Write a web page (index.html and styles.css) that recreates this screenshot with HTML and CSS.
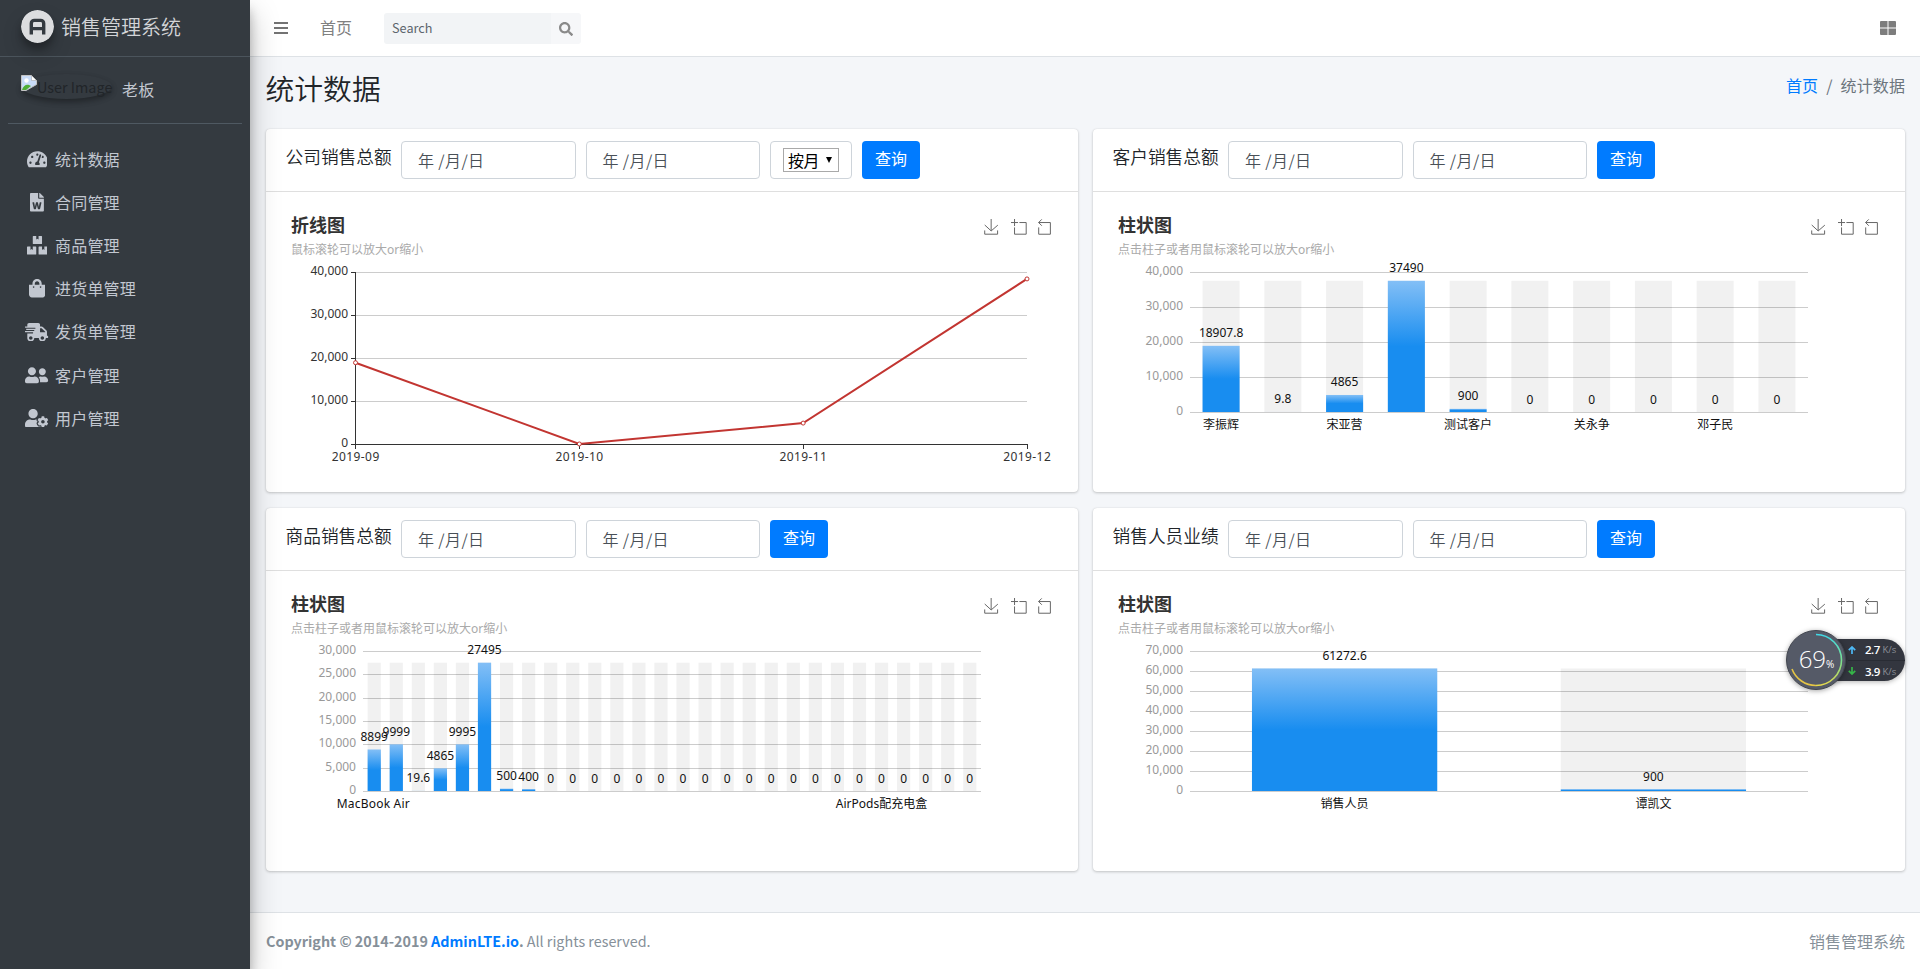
FILE: index.html
```html
<!DOCTYPE html>
<html lang="zh-CN">
<head>
<meta charset="utf-8">
<title>销售管理系统</title>
<link rel="stylesheet" href="styles.css">
</head>
<body>
<div class="wrapper">
  <aside class="sidebar">
    <a class="brand">
      <svg class="brand-logo" viewBox="0 0 33 33"><circle cx="16.5" cy="16.5" r="16.5" fill="#dcdddf"/><path d="M10.3 24.5V13.4a3 3 0 0 1 3-3h6.4a3 3 0 0 1 3 3V24.500M10.300 18.600H22.700" fill="none" stroke="#343a40" stroke-width="3.400"/></svg>
      <span class="brand-text">销售管理系统</span>
    </a>
    <div class="user-panel">
      <div class="user-image">
        <svg width="16" height="16" viewBox="0 0 16 16"><path d="M.5.5h10l5 5v4L5 15.500H.5z" fill="#c9dcf8" stroke="#c4c4c4"/><path d="M10.500.5v5h5z" fill="#fff" stroke="#aaa" stroke-width=".6"/><circle cx="5.500" cy="5.500" r="2.200" fill="#fff"/><path d="M1 15c1-4 4-6 7-5l2 1-5 4z" fill="#4fae35"/></svg><span>User Image</span>
      </div>
      <span class="user-name">老板</span>
    </div>
    <nav class="menu">
      <a class="menu-item"><span class="menu-icon"><svg viewBox="0 0 576 512"><path d="M288 32C128.940 32 0 160.940 0 320c0 52.800 14.250 102.260 39.060 144.800 5.610 9.620 16.300 15.200 27.440 15.200h443c11.140 0 21.830-5.580 27.440-15.200C561.750 422.260 576 372.800 576 320c0-159.060-128.940-288-288-288zm0 64c14.710 0 26.580 10.130 30.320 23.650-1.110 2.260-2.640 4.230-3.450 6.670l-9.220 27.670c-5.130 3.490-10.970 6.010-17.640 6.010-17.670 0-32-14.330-32-32S270.330 96 288 96zM96 384c-17.670 0-32-14.330-32-32s14.330-32 32-32 32 14.330 32 32-14.330 32-32 32zm48-160c-17.670 0-32-14.330-32-32s14.330-32 32-32 32 14.330 32 32-14.330 32-32 32zm246.770-72.410l-61.330 184C343.130 347.330 352 364.540 352 384c0 11.720-3.380 22.550-8.880 32H232.880c-5.500-9.450-8.880-20.280-8.880-32 0-33.940 26.500-61.430 59.900-63.590l61.340-184.010c4.170-12.560 17.730-19.450 30.360-15.170 12.570 4.190 19.350 17.790 15.170 30.360zm14.660 57.200l15.520-46.550c3.470-1.290 7.130-2.230 11.050-2.230 17.670 0 32 14.330 32 32s-14.330 32-32 32c-11.380-.01-20.890-6.280-26.570-15.220zM480 384c-17.670 0-32-14.330-32-32s14.330-32 32-32 32 14.330 32 32-14.330 32-32 32z"/></svg></span><span>统计数据</span></a>
      <a class="menu-item"><span class="menu-icon"><svg viewBox="0 0 384 512"><path d="M224 136V0H24C10.700 0 0 10.700 0 24v464c0 13.300 10.700 24 24 24h336c13.300 0 24-10.700 24-24V160H248c-13.200 0-24-10.800-24-24zm57.100 120H305c7.700 0 13.400 7.100 11.700 14.700l-38 168c-1.200 5.500-6.100 9.300-11.700 9.300h-38c-5.500 0-10.300-3.800-11.600-9.100-25.800-103.500-20.800-81.200-25.600-110.500h-.5c-1.100 14.300-2.400 17.400-25.600 110.500-1.300 5.300-6.100 9.100-11.600 9.100H117c-5.600 0-10.500-3.900-11.700-9.400l-37.800-168c-1.700-7.500 4-14.600 11.700-14.600h24.500c5.700 0 10.700 4 11.800 9.700 15.600 78 20.100 109.500 21 122.200 1.600-10.200 7.300-32.700 29.400-122.700 1.300-5.400 6.100-9.100 11.700-9.100h29.100c5.600 0 10.400 3.800 11.700 9.200 24 100.400 28.800 124 29.600 129.400-.2-11.200-2.600-17.800 21.600-129.200 1-5.600 5.900-9.500 11.500-9.500zM384 121.900v6.100H256V0h6.100c6.400 0 12.500 2.500 17 7l97.900 98c4.500 4.500 7 10.600 7 16.900z"/></svg></span><span>合同管理</span></a>
      <a class="menu-item"><span class="menu-icon"><svg viewBox="0 0 576 512"><path d="M560 288h-80v96l-32-21.300-32 21.300v-96h-80c-8.800 0-16 7.200-16 16v192c0 8.800 7.200 16 16 16h224c8.800 0 16-7.200 16-16V304c0-8.800-7.200-16-16-16zm-384-64h224c8.800 0 16-7.200 16-16V16c0-8.800-7.200-16-16-16h-80v96l-32-21.300L256 96V0h-80c-8.800 0-16 7.200-16 16v192c0 8.800 7.200 16 16 16zm64 64h-80v96l-32-21.300L96 384v-96H16c-8.800 0-16 7.200-16 16v192c0 8.800 7.200 16 16 16h224c8.800 0 16-7.200 16-16V304c0-8.800-7.200-16-16-16z"/></svg></span><span>商品管理</span></a>
      <a class="menu-item"><span class="menu-icon"><svg viewBox="0 0 448 512"><path d="M352 160v-32C352 57.420 294.579 0 224 0 153.420 0 96 57.420 96 128v32H0v272c0 44.183 35.817 80 80 80h288c44.183 0 80-35.817 80-80V160h-96zm-192-32c0-35.290 28.710-64 64-64s64 28.710 64 64v32H160v-32zm160 120c-13.255 0-24-10.745-24-24s10.745-24 24-24 24 10.745 24 24-10.745 24-24 24zm-192 0c-13.255 0-24-10.745-24-24s10.745-24 24-24 24 10.745 24 24-10.745 24-24 24z"/></svg></span><span>进货单管理</span></a>
      <a class="menu-item"><span class="menu-icon"><svg viewBox="0 0 640 512"><path d="M624 352h-16V243.900c0-12.700-5.100-24.900-14.100-33.900L494 110.100c-9-9-21.200-14.100-33.900-14.100H416V48c0-26.500-21.500-48-48-48H112C85.500 0 64 21.500 64 48v48H8c-4.400 0-8 3.600-8 8v16c0 4.400 3.600 8 8 8h272c4.400 0 8 3.600 8 8v16c0 4.400-3.600 8-8 8H40c-4.400 0-8 3.600-8 8v16c0 4.400 3.600 8 8 8h208c4.400 0 8 3.600 8 8v16c0 4.400-3.600 8-8 8H8c-4.400 0-8 3.600-8 8v16c0 4.400 3.600 8 8 8h208c4.400 0 8 3.600 8 8v16c0 4.400-3.600 8-8 8H64v128c0 53 43 96 96 96s96-43 96-96h128c0 53 43 96 96 96s96-43 96-96h48c8.800 0 16-7.200 16-16v-32c0-8.800-7.200-16-16-16zM160 464c-26.500 0-48-21.500-48-48s21.500-48 48-48 48 21.500 48 48-21.500 48-48 48zm320 0c-26.500 0-48-21.500-48-48s21.500-48 48-48 48 21.500 48 48-21.500 48-48 48zm80-208H416V144h44.100l99.900 99.900V256z"/></svg></span><span>发货单管理</span></a>
      <a class="menu-item"><span class="menu-icon"><svg viewBox="0 0 640 512"><path d="M192 256c61.900 0 112-50.100 112-112S253.900 32 192 32 80 82.100 80 144s50.100 112 112 112zm76.800 32h-8.300c-20.800 10-43.900 16-68.500 16s-47.600-6-68.500-16h-8.300C51.600 288 0 339.600 0 403.200V432c0 26.500 21.500 48 48 48h288c26.500 0 48-21.500 48-48v-28.800c0-63.600-51.600-115.200-115.200-115.200zM480 256c53 0 96-43 96-96s-43-96-96-96-96 43-96 96 43 96 96 96zm48 32h-3.800c-13.900 4.800-28.600 8-44.200 8s-30.300-3.200-44.200-8H432c-20.400 0-39.200 5.900-55.700 15.400 24.400 26.300 39.700 61.200 39.700 99.800v38.400c0 2.200-.5 4.300-.6 6.400H592c26.500 0 48-21.500 48-48 0-61.900-50.100-112-112-112z"/></svg></span><span>客户管理</span></a>
      <a class="menu-item"><span class="menu-icon"><svg viewBox="0 0 640 512"><path d="M610.500 373.300c2.600-14.100 2.600-28.500 0-42.600l25.800-14.900c3-1.700 4.300-5.200 3.300-8.500-6.700-21.600-18.200-41.200-33.200-57.400-2.300-2.500-6-3.100-9-1.400l-25.800 14.900c-10.900-9.300-23.400-16.500-36.900-21.300v-29.800c0-3.400-2.400-6.400-5.700-7.100-22.300-5-45-4.800-66.200 0-3.300.7-5.700 3.700-5.700 7.100v29.800c-13.500 4.800-26 12-36.900 21.300l-25.800-14.900c-2.900-1.700-6.700-1.100-9 1.400-15 16.200-26.500 35.800-33.200 57.400-1 3.300.4 6.800 3.300 8.500l25.800 14.900c-2.600 14.100-2.600 28.500 0 42.600l-25.800 14.900c-3 1.700-4.300 5.200-3.300 8.500 6.700 21.600 18.200 41.100 33.200 57.400 2.300 2.500 6 3.100 9 1.400l25.800-14.900c10.900 9.300 23.400 16.500 36.900 21.300v29.800c0 3.400 2.400 6.400 5.700 7.100 22.300 5 45 4.800 66.200 0 3.300-.7 5.700-3.700 5.700-7.100v-29.800c13.500-4.800 26-12 36.900-21.300l25.800 14.900c2.900 1.700 6.700 1.100 9-1.400 15-16.200 26.500-35.800 33.200-57.400 1-3.300-.4-6.800-3.300-8.500l-25.800-14.900zM496 400.500c-26.800 0-48.500-21.800-48.500-48.500s21.800-48.500 48.500-48.500 48.500 21.800 48.500 48.500-21.700 48.500-48.500 48.500zM224 256c70.700 0 128-57.300 128-128S294.700 0 224 0 96 57.300 96 128s57.300 128 128 128zm201.200 226.500c-2.300-1.200-4.600-2.600-6.800-3.900l-7.900 4.600c-6 3.400-12.800 5.300-19.600 5.300-10.900 0-21.400-4.600-28.900-12.600-18.300-19.800-32.300-43.900-40.200-69.600-5.500-17.700 1.900-36.400 17.900-45.700l7.900-4.600c-.1-2.600-.1-5.200 0-7.800l-7.900-4.600c-16-9.200-23.400-28-17.900-45.700.9-2.900 2.200-5.800 3.200-8.700-3.800-.3-7.500-1.200-11.400-1.200h-16.700c-22.200 10.200-46.900 16-72.900 16s-50.600-5.800-72.900-16h-16.700C60.200 288 0 348.200 0 422.400V464c0 26.500 21.500 48 48 48h352c10.100 0 19.500-3.200 27.200-8.500-1.200-3.800-2-7.700-2-11.800v-9.200z"/></svg></span><span>用户管理</span></a>
    </nav>
  </aside>

  <div class="main">
    <header class="navbar">
      <svg class="nav-bars" width="14" height="12" viewBox="0 0 14 12"><path d="M0 0h14v2H0zM0 5h14v2H0zM0 10h14v2H0z" fill="#737373"/></svg>
      <a class="nav-home">首页</a>
      <div class="search">
        <div class="search-input">Search</div>
        <div class="search-button"><svg width="14" height="14" viewBox="0 0 512 512"><path fill="#8a8a8a" d="M505 442.700L405.300 343c-4.500-4.500-10.600-7-17-7H372c27.600-35.300 44-79.700 44-128C416 93.100 322.900 0 208 0S0 93.100 0 208s93.100 208 208 208c48.300 0 92.700-16.400 128-44v16.300c0 6.400 2.500 12.500 7 17l99.700 99.700c9.400 9.400 24.600 9.400 33.900 0l28.300-28.300c9.400-9.400 9.400-24.600.1-34zM208 336c-70.700 0-128-57.200-128-128 0-70.700 57.200-128 128-128 70.700 0 128 57.200 128 128 0 70.700-57.200 128-128 128z"/></svg></div>
      </div>
      <svg class="nav-grid" width="16" height="14" viewBox="0 0 16 14"><path d="M1 0h6.500v6.500H0V1a1 1 0 0 1 1-1zM8.500 0H15a1 1 0 0 1 1 1v5.500H8.500zM0 7.500h7.500V14H1a1 1 0 0 1-1-1zM8.500 7.500H16V13a1 1 0 0 1-1 1H8.500z" fill="#7d7d7d"/></svg>
    </header>

    <div class="content-header">
      <h1>统计数据</h1>
      <div class="breadcrumb"><a>首页</a><span class="slash">/</span><span>统计数据</span></div>
    </div>

    <div class="cards">
      <section class="card">
        <div class="card-header">
          <h3>公司销售总额</h3>
          <div class="date">年 /月/日</div>
          <div class="date">年 /月/日</div>
          <div class="select-box"><div class="select"><span>按月</span><svg width="6" height="6" viewBox="0 0 6 6"><path d="M0 0h6L3 6z"/></svg></div></div>
          <div class="btn">查询</div>
        </div>
        <div class="card-body"><svg class="chart" id="company-chart" width="772" height="260"></svg></div>
      </section>
      <section class="card">
        <div class="card-header">
          <h3>客户销售总额</h3>
          <div class="date">年 /月/日</div>
          <div class="date">年 /月/日</div>
          <div class="btn">查询</div>
        </div>
        <div class="card-body"><svg class="chart" id="customer-chart" width="772" height="260"></svg></div>
      </section>
      <section class="card">
        <div class="card-header">
          <h3>商品销售总额</h3>
          <div class="date">年 /月/日</div>
          <div class="date">年 /月/日</div>
          <div class="btn">查询</div>
        </div>
        <div class="card-body"><svg class="chart" id="product-chart" width="772" height="260"></svg></div>
      </section>
      <section class="card">
        <div class="card-header">
          <h3>销售人员业绩</h3>
          <div class="date">年 /月/日</div>
          <div class="date">年 /月/日</div>
          <div class="btn">查询</div>
        </div>
        <div class="card-body"><svg class="chart" id="staff-chart" width="772" height="260"></svg></div>
      </section>
    </div>

    <footer class="footer">
      <div class="copyright"><strong>Copyright © 2014-2019 <a>AdminLTE.io</a>.</strong> All rights reserved.</div>
      <div>销售管理系统</div>
    </footer>
  </div>
</div>

<div class="monitor">
  <div class="monitor-speed">
    <div class="speed-row"><svg width="8" height="8" viewBox="0 0 8 8"><path d="M4 8V1M.8 4.200 4 1l3.200 3.200" fill="none" stroke="#4db8f5" stroke-width="1.700"/></svg><b>2.7</b><i>K/s</i></div>
    <div class="speed-row"><svg width="8" height="8" viewBox="0 0 8 8"><path d="M4 0v7M.8 3.800 4 7l3.200-3.200" fill="none" stroke="#35b548" stroke-width="1.700"/></svg><b>3.9</b><i>K/s</i></div>
  </div>
  <div class="monitor-dial">
    <svg class="dial-ring" viewBox="0 0 60 60">
      <defs><linearGradient id="ring" x1="0" y1="0" x2="0" y2="1"><stop offset="0" stop-color="#3fd9e6"/><stop offset=".55" stop-color="#7fe08a"/><stop offset="1" stop-color="#e6d84a"/></linearGradient></defs>
      <path d="M30 4.500A25.500 25.500 0 0 1 30 55.500" fill="none" stroke="url(#ring)" stroke-width="1.600"/>
      <path d="M30 55.500A25.500 25.500 0 0 1 6 39" fill="none" stroke="#e5c545" stroke-width="1.600"/>
    </svg>
    <span class="dial-value">69</span><span class="dial-unit">%</span>
  </div>
</div>
<script src="script.js"></script>
</body>
</html>
```

FILE: styles.css
```css
* { box-sizing: border-box; }
body {
  margin: 0;
  background: #f4f6f9;
  color: #212529;
  font: 400 16px/24px "Noto Sans CJK SC", "Noto Sans", sans-serif;
}
h1, h3 { margin: 0; font-weight: 350; }
.wrapper { display: flex; height: 969px; overflow: hidden; }

/* Sidebar */
.sidebar {
  position: relative;
  z-index: 2;
  width: 250px;
  flex: none;
  background: #343a40;
  color: #c2c7d0;
  box-shadow: 0 14px 28px rgba(0,0,0,.25), 0 10px 10px rgba(0,0,0,.22);
}
.brand {
  display: flex;
  align-items: center;
  height: 57px;
  padding: 0 0 2px 21px;
  border-bottom: 1px solid #4b545c;
  font-size: 20px;
  font-weight: 350;
  color: #d3d5d8;
}
.brand-logo {
  width: 33px;
  height: 33px;
  margin: -1px 7px 0 0;
  border-radius: 50%;
  box-shadow: 0 10px 20px rgba(0,0,0,.19), 0 6px 6px rgba(0,0,0,.23);
}
.user-panel {
  display: flex;
  align-items: flex-start;
  height: 67px;
  margin: 0 8px;
  padding: 17px 0 0 13px;
  border-bottom: 1px solid #4f5962;
}
.user-image {
  display: flex;
  width: 91px;
  height: 25px;
  border-radius: 50%;
  box-shadow: 0 3px 6px rgba(0,0,0,.16), 0 3px 6px rgba(0,0,0,.23);
  color: #212529;
  white-space: nowrap;
}
.user-image svg { flex: none; margin-top: 1px; }
.user-image span { font-size: 14.4px; line-height: 26px; }
.user-name { margin: 3px 0 0 10px; letter-spacing: .2px; }
.menu { padding-top: 16px; }
.menu-item {
  display: flex;
  align-items: center;
  height: 39.2px;
  margin-bottom: 4px;
  padding-left: 24px;
  line-height: 22px;
  letter-spacing: .2px;
}
.menu-item span + span { padding-bottom: 2px; }
.menu-icon { display: flex; justify-content: center; width: 26px; margin: -1px 5px 0 0; }
.menu-icon svg { height: 18.5px; fill: #c2c7d0; }

/* Top bar */
.main { display: flex; flex: 1; flex-direction: column; min-width: 0; }
.navbar {
  display: flex;
  align-items: center;
  height: 57px;
  flex: none;
  padding: 0 24px;
  background: #fff;
  border-bottom: 1px solid #dee2e6;
}
.nav-home { margin: -2px 0 0 32px; color: #808080; }
.search { display: flex; height: 31px; margin: 1px 0 0 32px; }
.search-input {
  width: 167px;
  padding-left: 8px;
  background: #f2f4f6;
  border-radius: 3px 0 0 3px;
  color: #5c656d;
  font-size: 12.7px;
  line-height: 29px;
}
.search-button {
  display: flex;
  align-items: center;
  justify-content: center;
  width: 30px;
  background: #f6f7f9;
  border-radius: 0 3px 3px 0;
}
.nav-grid { margin-left: auto; }

/* Page heading */
.content-header {
  display: flex;
  justify-content: space-between;
  height: 72px;
  flex: none;
  padding: 13px 15px 0 15.5px;
}
h1 { font-size: 28.8px; line-height: 35px; }
.breadcrumb { display: flex; margin-top: 3px; color: #6c757d; letter-spacing: .1px; }
.slash { padding: 0 8px; }
a { color: inherit; }
.breadcrumb a, .footer a { color: #007bff; }

/* Cards */
.cards {
  display: grid;
  grid-template-columns: 812px 812px;
  grid-auto-rows: 363px;
  gap: 16px 15px;
  padding-left: 15.5px;
}
.card {
  background: #fff;
  border-radius: 4px;
  box-shadow: 0 0 1px rgba(0,0,0,.125), 0 1px 3px rgba(0,0,0,.2);
}
.card-header {
  display: flex;
  gap: 10px;
  height: 63px;
  padding: 12px 20px;
  border-bottom: 1px solid rgba(0,0,0,.125);
}
h3 { width: 105.500px; font-size: 17.7px; line-height: 30px; white-space: nowrap; }
.date {
  width: 174.5px;
  padding-left: 16px;
  border: 1px solid #ced4da;
  border-radius: 4px;
  color: #495057;
  font-weight: 350;
  line-height: 36px;
  letter-spacing: .4px;
}
.select-box {
  display: flex;
  align-items: center;
  justify-content: center;
  width: 82px;
  border: 1px solid #ced4da;
  border-radius: 4px;
}
.select {
  display: flex;
  align-items: center;
  gap: 8px;
  width: 56px;
  height: 24px;
  padding-left: 4px;
  border: 1px solid #a9a9a9;
  color: #000;
}
.select svg { margin-top: -1px; flex: none; }
.select span { flex: none; width: 30px; letter-spacing: -.5px; white-space: nowrap; }
.btn {
  width: 58px;
  height: 38px;
  border-radius: 4px;
  background: #007bff;
  color: #fff;
  line-height: 35px;
  text-align: center;
}
.card-body { padding: 20px; }

/* Charts */
.chart { display: block; overflow: visible; font: 400 12px "Noto Sans", "Noto Sans CJK SC", sans-serif; }
.chart-title { font: 700 18px "Noto Sans CJK SC", sans-serif; fill: #333; }
.chart-subtitle { fill: #aaa; }
.toolbox { fill: none; stroke: #666; stroke-width: 3.8; }
.tick-dark { fill: #333; }
.tick-light { fill: #999; }
.label { fill: #111; }
.end { text-anchor: end; }
.middle { text-anchor: middle; }

/* Footer */
.footer {
  display: flex;
  justify-content: space-between;
  align-items: center;
  height: 57px;
  margin-top: auto;
  padding: 0 15px 0 16px;
  background: #fff;
  border-top: 1px solid #dee2e6;
  color: #869099;
}
.copyright { font-size: 14.35px; }

/* Floating network monitor */
.monitor { position: absolute; z-index: 3; left: 1786px; top: 630px; width: 119px; height: 60px; }
.monitor-speed {
  display: flex;
  flex-direction: column;
  height: 42px;
  margin: 9px 0 0 30px;
  padding-left: 32px;
  border-radius: 0 21px 21px 0;
  background: #33363f;
  box-shadow: 0 1px 5px rgba(0,0,0,.3);
}
.speed-row { display: flex; align-items: center; height: 21px; font-size: 11.5px; line-height: 21px; color: #fff; }
.speed-row + .speed-row { border-top: 1px solid #292c34; }
.speed-row svg { flex: none; margin-right: 9px; }
.speed-row b { width: 17.5px; font: 600 11.5px/21px "Open Sans", sans-serif; letter-spacing: -.5px; }
.speed-row i { color: #8d9097; font: 9.5px/21px "Open Sans", sans-serif; }
.monitor-dial {
  position: absolute;
  left: 0;
  top: 0;
  display: flex;
  justify-content: center;
  width: 60px;
  height: 60px;
  padding-left: 1px;
  border: 1px solid #42464f;
  border-radius: 50%;
  background: #555a67;
  box-shadow: 0 1px 5px rgba(0,0,0,.35);
  color: #fff;
}
.dial-ring { position: absolute; left: -1px; top: -1px; width: 60px; height: 60px; }
.dial-value { font: 300 24px/56px "Open Sans", sans-serif; }
.dial-unit { font: 10px/67px "Open Sans", sans-serif; }
```

FILE: script.js
```js
const TOP = 60;

const toolbox = `<g class="toolbox">
  <path transform="translate(697.500 7) scale(.262)" d="M4.700,22.900L29.300,45.500L54.700,23.400M4.600,43.600L4.600,58L53.800,58L53.800,43.600M29.200,45.100L29.200,0"/>
  <path transform="translate(725 7) scale(.262)" d="M0,13.500h26.900 M13.500,26.900V0 M32.100,13.500H58V58H13.500V32.100"/>
  <path transform="translate(750 7) scale(.262)" d="M22,1.400L9.900,13.500l12.300,12.300 M10.300,13.500H54.900v44.600H10.300v-26"/>
</g>`;

const text = (x, y, cls, value) => `<text x="${x}" y="${y}" class="${cls}">${value}</text>`;

const line = (x1, y1, x2, y2, color) =>
  `<line x1="${x1}" y1="${y1}" x2="${x2}" y2="${y2}" stroke="${color}" shape-rendering="crispEdges"/>`;

const heading = (title, subtitle) =>
  text(5, 19.5, 'chart-title', title) + text(5, 42, 'chart-subtitle', subtitle) + toolbox;

function lineChart(id, data) {
  const left = 69.5, right = 741, bottom = 232, max = 40000;
  const px = i => left + (right - left) * i / (data.length - 1);
  const py = v => bottom - (bottom - TOP) * v / max;
  let out = heading('折线图', '鼠标滚轮可以放大or缩小');
  for (let v = 0; v <= max; v += 10000) {
    const y = py(v) + .5;
    if (v) out += line(left, y, right, y, '#ccc');
    out += line(left - 5, y, left, y, '#333');
    out += text(62, y + 2, 'tick-dark end', v.toLocaleString('en-US'));
  }
  out += line(left, TOP, left, bottom + 1, '#333') + line(left, bottom + .5, right, bottom + .5, '#333');
  data.forEach(([name], i) => {
    out += line(px(i), bottom, px(i), bottom + 5, '#333') +
      `<text x="${px(i)}" y="${bottom + 16.5}" class="tick-dark middle" textLength="47.500">${name}</text>`;
  });
  out += `<polyline fill="none" stroke="#c23531" stroke-width="2" points="${data.map(([, v], i) => px(i) + ',' + py(v)).join(' ')}"/>`;
  data.forEach(([, v], i) => {
    out += `<circle cx="${px(i)}" cy="${py(v)}" r="2" fill="#fff" stroke="#c23531"/>`;
  });
  document.getElementById(id).innerHTML = out;
}

function barChart(id, max, step, values, names) {
  const left = 77.2, right = 694.8, bottom = 200;
  const band = (right - left) / values.length, width = band * .6;
  const py = v => bottom - (bottom - TOP) * v / max;
  const peak = py(Math.max(...values));
  let out = `<defs><linearGradient id="${id}-fill" x1="0" y1="0" x2="0" y2="1"><stop offset="0" stop-color="#83bff6"/><stop offset=".5" stop-color="#188df0"/></linearGradient></defs>`;
  out += heading('柱状图', '点击柱子或者用鼠标滚轮可以放大or缩小');
  for (let v = 0; v <= max; v += step) {
    const y = Math.round(py(v)) + .5;
    out += line(left, y, right, y, '#ccc') + text(70, y + 2, 'tick-light end', v.toLocaleString('en-US'));
  }
  values.forEach((v, i) => {
    const x = left + band * (i + .2);
    out += `<rect x="${x}" y="${peak}" width="${width}" height="${bottom - peak}" fill="rgba(0,0,0,.055)"/>`;
    out += `<rect x="${x}" y="${py(v)}" width="${width}" height="${bottom - py(v)}" fill="url(#${id}-fill)"/>`;
  });
  values.forEach((v, i) => {
    out += text(left + band * (i + .5), py(v) - 8.5, 'label middle', v);
  });
  for (const i in names) {
    const latinLead = names[i] === 'MacBook Air' ? ' textLength="73"' : '';
    out += `<text x="${left + band * (+i + .5) - (latinLead ? 1 : 0)}" y="${bottom + 16.5}" class="label middle"${latinLead}>${names[i]}</text>`;
  }
  document.getElementById(id).innerHTML = out;
}

lineChart('company-chart', [['2019-09', 18907.8], ['2019-10', 9.8], ['2019-11', 4865], ['2019-12', 38390]]);
barChart('customer-chart', 40000, 10000, [18907.8, 9.8, 4865, 37490, 900, 0, 0, 0, 0, 0],
  { 0: '李振辉', 2: '宋亚营', 4: '测试客户', 6: '关永争', 8: '邓子民' });
barChart('product-chart', 30000, 5000, [8899, 9999, 19.6, 4865, 9995, 27495, 500, 400, ...Array(20).fill(0)],
  { 0: 'MacBook Air', 23: 'AirPods配充电盒' });
barChart('staff-chart', 70000, 10000, [61272.6, 900], { 0: '销售人员', 1: '谭凯文' });
```
